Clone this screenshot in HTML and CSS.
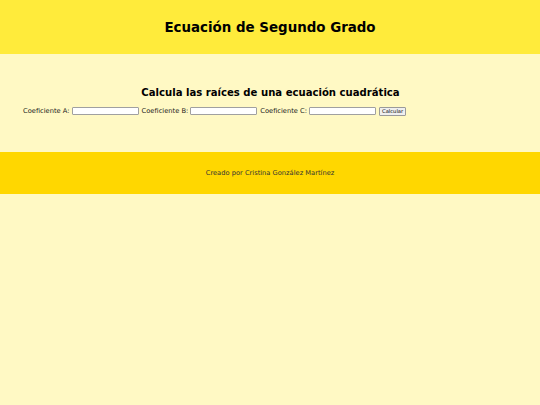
FILE: index.html
```html
<!DOCTYPE html>
<html lang="es">
<head>
<meta charset="utf-8">
<title>Ecuación de Segundo Grado</title>
<link rel="stylesheet" href="styles.css">
</head>
<body>
<header class="site-header">
  <h1 class="title">Ecuación de Segundo Grado</h1>
</header>
<main class="content">
  <h2 class="subtitle">Calcula las raíces de una ecuación cuadrática</h2>
  <form class="form">
    <label class="label" for="a">Coeficiente A:</label>
    <input class="field" id="a" type="text">
    <label class="label" for="b">Coeficiente B:</label>
    <input class="field" id="b" type="text">
    <label class="label" for="c">Coeficiente C:</label>
    <input class="field" id="c" type="text">
    <button class="btn" type="button">Calcular</button>
  </form>
</main>
<footer class="site-footer">
  <p class="credit">Creado por Cristina González Martínez</p>
</footer>
</body>
</html>
```

FILE: styles.css
```css
html, body {
  margin: 0;
  padding: 0;
}
body {
  background: #fff9c4;
  font-family: "DejaVu Sans", Verdana, sans-serif;
  color: #000;
  min-height: 405px;
}
.site-header {
  background: #ffeb3b;
  height: 54px;
  display: flex;
  align-items: center;
  justify-content: center;
}
.title {
  margin: 0;
  font-size: 13.4px;
  font-weight: bold;
}
.content {
  height: 98px;
  box-sizing: border-box;
  padding: 26px 22px 0 23px;
}
.subtitle {
  margin: 0;
  text-align: center;
  font-size: 10.1px;
  font-weight: bold;
  line-height: 25px;
}
.form {
  display: flex;
  align-items: center;
  gap: 2px;
  margin-top: 0;
  height: 12px;
}
.label {
  font-size: 6.7px;
  color: #1a1a1a;
  font-weight: normal;
}
.field {
  width: 67px;
  height: 8px;
  box-sizing: border-box;
  border: 1px solid #a0a0a0;
  border-radius: 1px;
  background: #fff;
  padding: 0;
  margin: 0 1px 0 0;
  font-size: 6.7px;
}
.btn {
  height: 9px;
  box-sizing: border-box;
  padding: 0 2px;
  margin: 0;
  font-family: "DejaVu Sans", Verdana, sans-serif;
  font-size: 5.2px;
  line-height: 7px;
  background: #efefef;
  border: 1px solid #9a9a9a;
  border-radius: 1px;
  color: #000;
}
.site-footer {
  background: #ffd700;
  height: 42px;
  display: flex;
  align-items: center;
  justify-content: center;
}
.credit {
  margin: 0;
  font-size: 6.7px;
  color: #333;
}
```
